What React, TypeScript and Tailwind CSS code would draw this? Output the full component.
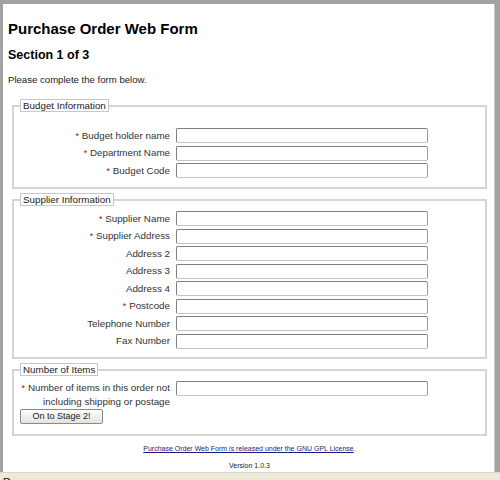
const budgetRows = [
  { label: 'Budget holder name', required: true },
  { label: 'Department Name', required: true },
  { label: 'Budget Code', required: true },
]

const supplierRows = [
  { label: 'Supplier Name', required: true },
  { label: 'Supplier Address', required: true },
  { label: 'Address 2', required: false },
  { label: 'Address 3', required: false },
  { label: 'Address 4', required: false },
  { label: 'Postcode', required: true },
  { label: 'Telephone Number', required: false },
  { label: 'Fax Number', required: false },
]

function TextBox() {
  return (
    <input
      type="text"
      className="h-[15px] w-[252px] rounded-[2px] border border-[#7f7f7f] border-b-[#c4c4c4] border-r-[#9a9a9a] bg-white outline-none"
    />
  )
}

function Star() {
  return <span className="text-[#b0102a]">* </span>
}

function Legend({ children }: { children: React.ReactNode }) {
  return (
    <legend className="ml-[6px] border border-[#c8c8c8] px-[2px] text-[9.8px] leading-[11px] text-[#222]">
      {children}
    </legend>
  )
}

function Rows({ rows }: { rows: { label: string; required: boolean }[] }) {
  return (
    <div className="grid grid-cols-[156px_252px] items-center gap-x-[6px] gap-y-[2.5px]">
      {rows.map((r) => (
        <div key={r.label} className="contents">
          <label className="text-right text-[9.8px] leading-[12px] text-[#333]">
            {r.required && <Star />}
            {r.label}
          </label>
          <TextBox />
        </div>
      ))}
    </div>
  )
}

export default function App() {
  return (
    <div className="flex h-[480px] w-[500px] flex-col overflow-hidden bg-[#a2a2a2] font-['Liberation_Sans',Arial,sans-serif]">
      {/* window chrome top */}
      <div className="h-[4px] shrink-0" />

      <div className="flex min-h-0 flex-1">
        <div className="w-[3px] shrink-0" />

        {/* page */}
        <div className="flex-1 overflow-hidden bg-white pl-[5px] pr-[3px]">
          <h1 className="mt-[16px] text-[15px] font-bold leading-[18px] text-black">
            Purchase Order Web Form
          </h1>
          <h2 className="mt-[10px] text-[12.5px] font-bold leading-[15px] text-black">
            Section 1 of 3
          </h2>
          <p className="mt-[11px] text-[9.6px] leading-[12px] text-[#222]">
            Please complete the form below.
          </p>

          <fieldset className="mx-[4px] mt-[13px] border-2 border-[#d4d4d4] pb-[9px] pt-[16px]">
            <Legend>Budget Information</Legend>
            <Rows rows={budgetRows} />
          </fieldset>

          <fieldset className="mx-[4px] mt-[4px] border-2 border-[#d4d4d4] pb-[8px] pt-[5px]">
            <Legend>Supplier Information</Legend>
            <Rows rows={supplierRows} />
          </fieldset>

          <fieldset className="mx-[4px] mt-[4.5px] border-2 border-[#d4d4d4] pb-[10px] pt-[5px]">
            <Legend>Number of Items</Legend>
            <div className="grid grid-cols-[156px_252px] items-start gap-x-[6px]">
              <label className="text-right text-[9.8px] leading-[13.5px] text-[#333]">
                <Star />
                Number of items in this order not
                <br />
                including shipping or postage
              </label>
              <TextBox />
            </div>
            <button
              type="button"
              className="ml-[6px] mt-[1px] block h-[15px] w-[83px] rounded-[2px] border border-[#8a8a8a] bg-gradient-to-b from-white to-[#e4e2dc] text-[9px] leading-[13px] text-[#222]"
            >
              On to Stage 2!
            </button>
          </fieldset>

          <p className="mt-[7.5px] text-center text-[7px] leading-[9px] text-[#222]">
            <a href="#" className="text-[#1c1c80] underline">
              Purchase Order Web Form is released under the GNU GPL License
            </a>
            .
          </p>
          <p className="mt-[8px] text-center text-[7px] leading-[9px] text-[#222]">Version 1.0.3</p>
        </div>

        <div className="w-[6px] shrink-0 border-l border-[#c9c9c9]" />
      </div>

      {/* status bar */}
      <div className="h-[8px] shrink-0 overflow-hidden border-t border-[#d6d6d6] bg-[#ece9d8] pl-[3px] pt-[3px] text-[11px] leading-[12px] text-[#111]">
        Done
      </div>
    </div>
  )
}
